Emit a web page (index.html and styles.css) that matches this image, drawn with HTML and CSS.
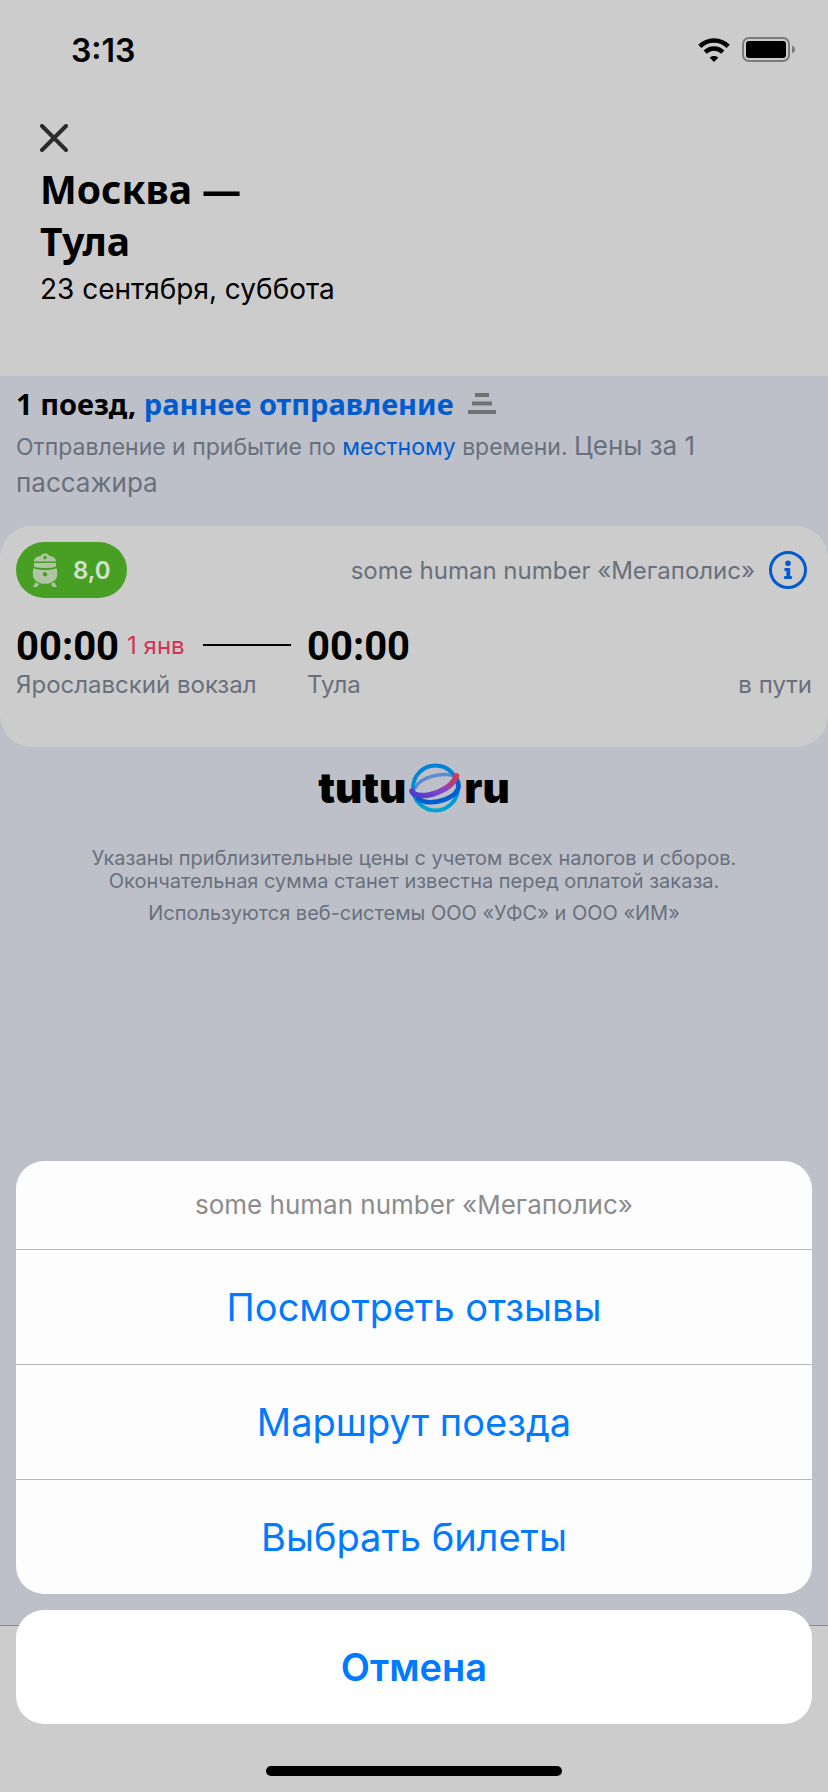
FILE: index.html
```html
<!DOCTYPE html>
<html lang="ru">
<head>
<meta charset="utf-8">
<meta name="viewport" content="width=device-width, initial-scale=1">
<title>Москва — Тула</title>
<link rel="stylesheet" href="styles.css">
</head>
<body>
<div class="screen">
  <header class="header">
    <div class="status">
      <span class="clock">3:13</span>
      <span class="status-icons">
        <svg width="32" height="24" viewBox="0 0 32 24" aria-hidden="true">
          <g fill="none" stroke="#000" stroke-width="4.6">
            <path d="M1.8 8.3C9.8.5 22.2.5 30.2 8.3"/>
            <path d="M7.2 14.1c5-4.8 12.600-4.800 17.600 0"/>
          </g>
          <path d="M16 24l-4.400-4.400c2.400-2.200 6.400-2.200 8.800 0z"/>
        </svg>
        <svg width="54" height="26" viewBox="0 0 54 26" aria-hidden="true">
          <rect x="1" y="1" width="46" height="23" rx="6" fill="none" stroke="#7b7b7b" stroke-width="2"/>
          <rect x="4" y="4" width="40" height="17" rx="3"/>
          <path d="M50 8.500c4 1.500 4 6.500 0 8z" fill="#7b7b7b"/>
        </svg>
      </span>
    </div>
    <div class="heading">
      <button class="close" type="button" aria-label="Закрыть">
        <svg width="28" height="28" viewBox="0 0 28 28" aria-hidden="true"><path d="M2 2l24 24M26 2L2 26" stroke="#2b2b2b" stroke-width="4" stroke-linecap="round"/></svg>
      </button>
      <h1 class="route">Москва —<br>Тула</h1>
      <p class="date">23 сентября, суббота</p>
    </div>
  </header>

  <main class="content">
    <section class="summary">
      <h2 class="sort">1 поезд, <a class="link" href="#sort">раннее отправление</a>
        <svg class="sort-icon" width="28" height="22" viewBox="0 0 28 22" aria-hidden="true"><path d="M7 2h14M4 10.500h20M0 19h28" stroke="#727272" stroke-width="4"/></svg>
      </h2>
      <p class="note">Отправление и прибытие по <a class="link" href="#time">местному</a> времени. <span class="price-note">Цены за 1 пассажира</span></p>
    </section>

    <article class="card">
      <div class="card-top">
        <span class="rating">
          <svg width="26" height="34" viewBox="0 0 26 34" fill="#b1c4a6" aria-hidden="true">
            <path fill-rule="evenodd" d="M2 8.500C2 5 5 3 8.800 2.900 10-.7 16-.7 17.200 2.900 21 3 24 5 24 8.500zM13 2.800a1.800 1.800 0 100 3.600 1.800 1.800 0 000-3.600z"/>
            <path d="M2 10h22v3.200c-1 1.200-4 1.700-11 1.700S3 14.400 2 13.200z"/>
            <path fill-rule="evenodd" d="M1.400 15.200c3 1.400 7 1.700 11.600 1.700s8.600-.3 11.600-1.700c.6 2.200.7 4.400.4 7.800-.3 4.500-6 7.800-12 7.800S1.300 27.500 1 23c-.3-3.400-.2-5.600.4-7.800zM13 19a2.200 2.200 0 100 4.400 2.200 2.200 0 000-4.400z"/>
            <path d="M3.500 29.500l3.800 1.300L5 34H1zM22.500 29.500l-3.800 1.300L21 34h4z"/>
          </svg>
          8,0
        </span>
        <span class="train">some human number «Мегаполис»</span>
        <button class="info" type="button" aria-label="О поезде">
          <svg width="38" height="38" viewBox="0 0 38 38" aria-hidden="true"><circle cx="19" cy="19" r="17.500" fill="none" stroke="#005bd1" stroke-width="3"/><circle cx="19" cy="12.300" r="2.800" fill="#005bd1"/><path d="M15.500 17h5.700v8h1.600v3h-7.600v-3h2.200v-5h-1.900z" fill="#005bd1"/></svg>
        </button>
      </div>
      <div class="trip">
        <div class="departure">
          <div class="time-row"><time class="time">00:00</time><span class="day">1 янв</span><span class="line"></span></div>
          <div class="place">Ярославский вокзал</div>
        </div>
        <div class="arrival">
          <time class="time">00:00</time>
          <div class="place">Тула</div>
        </div>
        <div class="duration">в пути</div>
      </div>
    </article>

    <footer class="legal">
      <div class="logo">
        <span>tutu</span>
        <svg width="52" height="50" viewBox="0 0 52 50" fill="none" stroke-linecap="round" aria-hidden="true">
          <defs>
            <linearGradient id="globe" x1="0" y1="0" x2="0" y2="1"><stop offset="0" stop-color="#0080d6"/><stop offset="1" stop-color="#00a5cf"/></linearGradient>
            <linearGradient id="sash" x1="0" y1="1" x2="1" y2="0"><stop offset="0" stop-color="#4a3ccf"/><stop offset=".45" stop-color="#8145cc"/><stop offset="1" stop-color="#d93650"/></linearGradient>
          </defs>
          <path d="M6 25C11 14 32 9 46 13" stroke="#5a8cd0" stroke-width="3.500"/>
          <circle cx="26.500" cy="25" r="22.500" stroke="url(#globe)" stroke-width="4"/>
          <path d="M47 15c6 9 1 17-11 21.500-11 4-22 3.500-27-1" stroke="#005fd0" stroke-width="4.600"/>
          <path d="M3 28c2 6 14 6 26.500 1C39 25 45.500 19 47.500 13" stroke="url(#sash)" stroke-width="5.600"/>
        </svg>
        <span>ru</span>
      </div>
      <p class="legal-text">Указаны приблизительные цены с учетом всех налогов и сборов. Окончательная сумма станет известна перед оплатой заказа.</p>
      <p class="legal-text">Используются веб-системы ООО «УФС» и ООО «ИМ»</p>
    </footer>
  </main>
  <div class="bottom-bar"></div>

  <div class="sheet" role="dialog" aria-labelledby="sheet-title">
    <div class="options">
      <p class="sheet-title" id="sheet-title">some human number «Мегаполис»</p>
      <button class="option" type="button">Посмотреть отзывы</button>
      <button class="option" type="button">Маршрут поезда</button>
      <button class="option" type="button">Выбрать билеты</button>
    </div>
    <button class="cancel" type="button">Отмена</button>
    <div class="home"></div>
  </div>
</div>
</body>
</html>
```
FILE: styles.css
```css
* { box-sizing: border-box; }

body {
  margin: 0;
  background: #ccc;
  color: #000;
  font-family: Inter, "Liberation Sans", sans-serif;
  font-size: 24px;
}

h1, h2, p { margin: 0; }

button {
  border: 0;
  padding: 0;
  background: none;
  font-family: inherit;
  cursor: pointer;
}

.screen {
  position: relative;
  display: flex;
  flex-direction: column;
  min-height: 100vh;
}

.header { padding-bottom: 65px; }

.status {
  display: flex;
  align-items: center;
  justify-content: space-between;
  height: 100px;
  padding: 0 32px 0 71px;
}

.clock { font-size: 32px; font-weight: 600; }

.status-icons { display: flex; align-items: center; gap: 12px; }

.heading { padding: 24px 40px 0; }

.close { display: block; }
.close svg { display: block; }

.route {
  margin-top: 11px;
  font: 700 39px/52px "Noto Sans", sans-serif;
}

.date { font-size: 28px; line-height: 44px; }

.content { flex: 1; background: #bdc0c9; }

.summary { padding: 6px 16px 24px; }

.sort {
  display: flex;
  align-items: center;
  font: 700 29px/44px "Noto Sans", sans-serif;
  white-space: pre;
}

.sort-icon { margin-left: 14px; }

.link { color: #005bd1; text-decoration: none; }

.note {
  max-width: 740px;
  padding-top: 2px;
  font-size: 23px;
  line-height: 36px;
  color: #69707d;
}

.price-note { font-size: 26px; }

.card {
  padding: 16px;
  min-height: 221px;
  border-radius: 32px;
  background: #ccc;
}

.card-top { display: flex; align-items: center; }

.rating {
  display: flex;
  align-items: center;
  gap: 15px;
  height: 56px;
  padding: 0 16px;
  border-radius: 28px;
  background: #47a023;
  color: #d5e0cf;
  font-weight: 600;
}

.train { margin-left: auto; font-size: 24px; color: #69707d; }

.info { margin: 0 5px 0 14px; }
.info svg { display: block; }

.trip { display: flex; margin-top: 27px; }

.departure { width: 275px; margin-right: 16px; }

.time-row { display: flex; align-items: center; }

.time { display: block; font: 700 40px/44px Roboto, sans-serif; }

.day { margin: 0 18px 4px 8px; color: #d23355; }

.line { flex: 1; height: 2px; margin-bottom: 4px; background: #000; }

.place, .duration { font-size: 24px; line-height: 32px; color: #69707d; }

.duration { margin-left: auto; align-self: flex-start; padding-top: 44px; }

.legal {
  padding: 16px 60px;
  text-align: center;
  font-size: 20px;
  line-height: 23px;
  color: #69707d;
}

.logo {
  display: flex;
  align-items: center;
  justify-content: center;
  gap: 3px;
  margin-bottom: 34px;
  color: #000;
  font: 900 42px/50px Inter, sans-serif;
}

.legal-text { margin-bottom: 9px; }

.bottom-bar {
  height: 167px;
  border-top: 1px solid #858990;
  background: #ccc;
}

.sheet {
  position: absolute;
  right: 0;
  bottom: 0;
  left: 0;
  display: flex;
  flex-direction: column;
  padding: 0 16px 16px;
}

.options {
  overflow: hidden;
  border-radius: 28px;
  background: #fdfdfd;
}

.sheet-title {
  font-size: 26px;
  line-height: 88px;
  text-align: center;
  color: #8c8c8c;
}

.option {
  display: block;
  width: 100%;
  height: 115px;
  border-top: 1px solid #b8b9bb;
  font-size: 38px;
  color: #007aff;
}

.cancel {
  height: 114px;
  margin-top: 16px;
  border-radius: 28px;
  background: #fff;
  font-size: 38px;
  font-weight: 600;
  color: #007aff;
}

.home {
  align-self: center;
  width: 296px;
  height: 10px;
  margin-top: 42px;
  border-radius: 5px;
  background: #000;
}
```
